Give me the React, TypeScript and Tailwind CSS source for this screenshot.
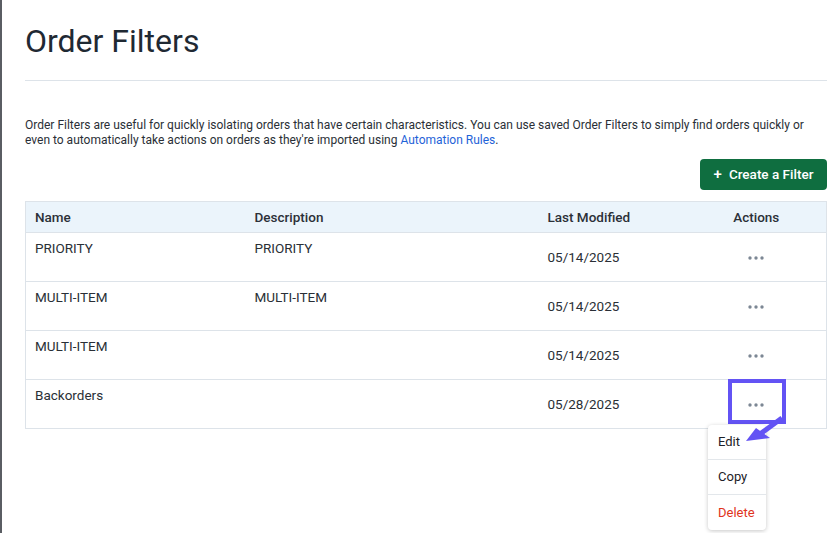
import React from "react";

const rows = [
  { name: "PRIORITY", description: "PRIORITY", modified: "05/14/2025" },
  { name: "MULTI-ITEM", description: "MULTI-ITEM", modified: "05/14/2025" },
  { name: "MULTI-ITEM", description: "", modified: "05/14/2025" },
  { name: "Backorders", description: "", modified: "05/28/2025" },
];

function Dots() {
  return (
    <svg width="16" height="4" viewBox="0 0 16 4" className="inline-block">
      <circle cx="2" cy="2" r="1.7" fill="#7c8794" />
      <circle cx="8" cy="2" r="1.7" fill="#7c8794" />
      <circle cx="14" cy="2" r="1.7" fill="#7c8794" />
    </svg>
  );
}

export default function App() {
  return (
    <div className="relative min-h-[533px] w-[833px] bg-white border-l-2 border-[#5a5d63] font-['Roboto',sans-serif] text-[#22272e]">
      <div className="pl-[23px] pr-[6px]">
        {/* HEADER */}
        <h1 className="pt-[22px] pb-[20px] text-[32px] leading-[38px] text-[#1f2933] border-b border-[#dde3e9]">
          Order Filters
        </h1>

        <p className="mt-[37px] text-[12px] leading-[15px] text-[#2a2f36]">
          Order Filters are useful for quickly isolating orders that have certain characteristics. You can use saved Order Filters to simply find orders quickly or even to automatically take actions on orders as they're imported using <a className="text-[#1f63d8]">Automation Rules</a>.
        </p>

        <div className="flex justify-end mt-[11px]">
          <button className="h-[31px] w-[127px] rounded-[4px] bg-[#0f6e40] text-white text-[13.5px] font-medium flex items-center justify-center gap-[7px]">
            <span className="text-[15px] leading-none">+</span> Create a Filter
          </button>
        </div>

        {/* TABLE */}
        <table className="mt-[11px] w-full border-collapse border border-[#dde3e9] text-[13.5px]">
          <colgroup>
            <col className="w-[220px]" />
            <col className="w-[293px]" />
            <col className="w-[148px]" />
            <col />
          </colgroup>
          <thead>
            <tr className="h-[31px] bg-[#ebf4fb] text-[#2b3038]">
              <th className="px-[9px] text-left font-medium">Name</th>
              <th className="px-[9px] text-left font-medium">Description</th>
              <th className="px-[9px] text-left font-medium">Last Modified</th>
              <th className="px-[9px] text-center font-medium">Actions</th>
            </tr>
          </thead>
          <tbody>
            {rows.map((r, i) => (
              <tr key={i} className="h-[49px] border-t border-[#dde3e9] text-[#2a2f36]">
                <td className="px-[9px] pt-[5px] align-top">{r.name}</td>
                <td className="px-[9px] pt-[5px] align-top">{r.description}</td>
                <td className="px-[9px] align-middle">{r.modified}</td>
                <td className="px-[9px] text-center align-middle">
                  <Dots />
                </td>
              </tr>
            ))}
          </tbody>
        </table>
      </div>

      {/* highlight box */}
      <div className="absolute left-[726px] top-[379px] w-[58px] h-[45px] border-[4px] border-[#6353f4]" />

      {/* dropdown */}
      <div className="absolute left-[706px] top-[425px] w-[58px] rounded-[4px] bg-white shadow-[0_1px_4px_rgba(0,0,0,0.22)] text-[13px]">
        <div className="h-[35px] flex items-center px-[10px] border-b border-[#e3e7eb] text-[#1d2127]">Edit</div>
        <div className="h-[35px] flex items-center px-[10px] border-b border-[#e3e7eb] text-[#1d2127]">Copy</div>
        <div className="h-[35px] flex items-center px-[10px] text-[#e0331c]">Delete</div>
      </div>

      {/* arrow */}
      <svg className="absolute left-[738px] top-[412px]" width="50" height="32" viewBox="0 0 50 32">
        <line x1="42" y1="6" x2="20" y2="22" stroke="#6353f4" strokeWidth="5" />
        <polygon points="6,29 16,16 30,26" fill="#6353f4" />
      </svg>
    </div>
  );
}
